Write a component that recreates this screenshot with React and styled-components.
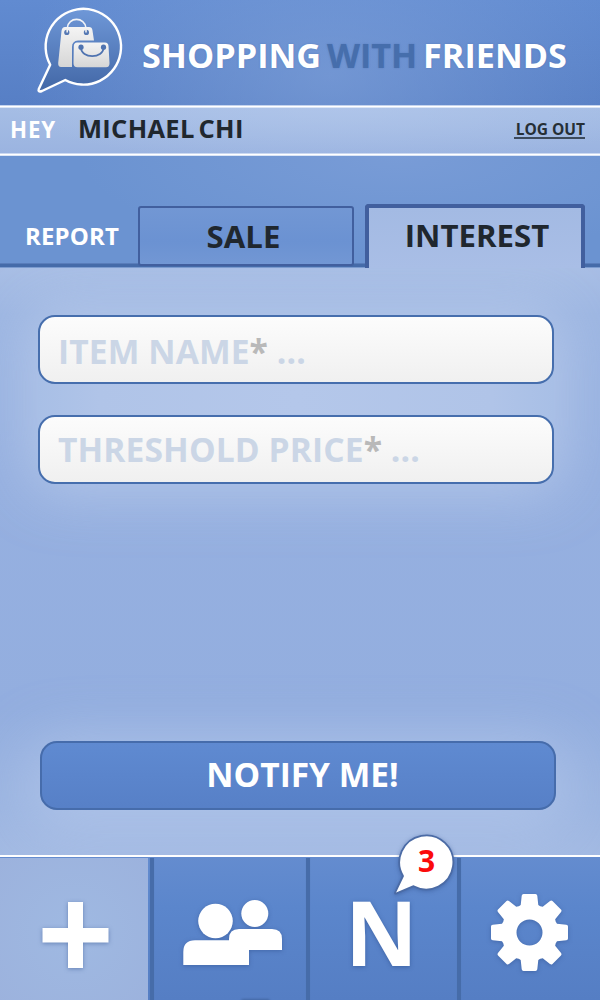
import React from "react";
import styled, { createGlobalStyle } from "styled-components";

const GlobalStyle = createGlobalStyle`
  * { box-sizing: border-box; }
  body { margin: 0; }
`;

const Screen = styled.main`
  display: flex;
  flex-direction: column;
  width: 600px;
  height: 1000px;
  overflow: hidden;
  font-family: "Open Sans", sans-serif;
  font-weight: 700;
  line-height: 1;
  white-space: nowrap;
  color: #fff;
  background: #6b93d1;
`;

const Header = styled.header`
  display: flex;
  align-items: flex-start;
  height: 105px;
  padding: 4px 0 0 33px;
  background:
    radial-gradient(ellipse 310px 190px at 330px 75px, rgba(130, 163, 218, 0.6), rgba(110, 150, 212, 0) 100%),
    linear-gradient(#618bd1, #577fc5);
`;

const Title = styled.h1`
  margin: 34px 0 0 16px;
  font-size: 34.2px;
  line-height: 34px;
  text-shadow: 0 0 2px rgba(62, 98, 165, 0.45);
  word-spacing: -3px;
`;

const Accent = styled.span`
  color: #466eac;
`;

const UserBar = styled.section`
  display: flex;
  height: 51px;
  padding: 3px 15px 0 10px;
  background:
    linear-gradient(#c4d3ee 1px, #fff 1px 2px, #dce6f6 2px) 0 0 / 100% 3px no-repeat,
    linear-gradient(#cbd9f1 1px, #fff 1px 2px, #dce6f6 2px) 0 100% / 100% 3px no-repeat,
    radial-gradient(ellipse 330px 60px at 340px 0, rgba(182, 202, 237, 0.6), rgba(170, 193, 232, 0) 100%),
    linear-gradient(#a6bee5, #9ab3e0);
`;

const Greeting = styled.span`
  width: 68px;
  margin-top: 10px;
  font-size: 22.3px;
  line-height: 23px;
  letter-spacing: 0.9px;
`;

const UserName = styled.span`
  flex: 1;
  margin-top: 7px;
  font-size: 25.5px;
  line-height: 26px;
  letter-spacing: 0.3px;
  word-spacing: -3px;
  color: #20272e;
`;

const LogOut = styled.a`
  align-self: flex-start;
  margin-top: 12px;
  height: 19px;
  font-size: 15.5px;
  line-height: 18px;
  padding-left: 2px;
  color: #262f36;
  border-bottom: 2px solid #3c4a5c;
`;

const TabBar = styled.nav`
  display: flex;
  align-items: flex-end;
  height: 112px;
  padding-left: 25px;
  background:
    linear-gradient(#456ba9, #456ba9) 0 108px / 100% 3px no-repeat,
    linear-gradient(#5579b8, #7f9fd2) 0 107px / 100% 5px no-repeat,
    radial-gradient(ellipse 320px 100px at 400px 0, rgba(124, 158, 216, 0.8), rgba(107, 147, 210, 0)),
    #6b93d1;
`;

const TabLabel = styled.span`
  width: 113px;
  margin-bottom: 20px;
  font-size: 24px;
  line-height: 25px;
  letter-spacing: 0.15px;
`;

const Tab = styled.button`
  display: flex;
  justify-content: center;
  align-items: flex-start;
  width: ${(p) => (p.$active ? "220px" : "216px")};
  height: ${(p) => (p.$active ? "64px" : "60px")};
  margin: ${(p) => (p.$active ? "0 0 0 11px" : "0 0 2px")};
  padding: ${(p) => (p.$active ? "12px 0 0 4px" : "13px 5px 0 0")};
  border: solid #415f9e;
  border-width: ${(p) => (p.$active ? "4px 4px 0" : "2px")};
  border-radius: ${(p) => (p.$active ? "4px 4px 0 0" : "3px")};
  background: ${(p) => (p.$active ? "linear-gradient(#a3bae3, #a9bee6)" : "linear-gradient(#7297d4, #6b92d2 60%, #7297d4)")};
  color: #20272e;
  font: 700 31.2px/31px "Open Sans", sans-serif;
`;

const Content = styled.section`
  display: flex;
  flex-direction: column;
  height: 587px;
  padding: 47px 44px 0 38px;
  overflow: hidden;
  background: linear-gradient(#a8bee5, #9db6e2 8%, #96b0e0 35%, #93aedf 75%, #9cb5e1 92%, #a3bae3);
`;

const FieldGroup = styled.div`
  display: flex;
  flex-direction: column;
  gap: 31px;
  width: 516px;
  border-radius: 17px;
  background: linear-gradient(90deg, #a8bfe6, #b0c4e8 12%, #b4c7ea 50%, #b0c4e8 88%, #a8bfe6);
  box-shadow: 0 0 60px 8px rgba(186, 204, 235, 0.8);
`;

const Field = styled.label`
  display: flex;
  align-items: flex-start;
  height: 69px;
  padding: ${(p) => p.$top || "16px"} 0 0 18px;
  border: 2px solid #466ead;
  border-radius: 17px;
  background: linear-gradient(#fcfcfc, #f0f0f0);
  color: #cbd6e6;
  font-size: 33.6px;
  line-height: 36px;
  letter-spacing: 0.1px;
  white-space: pre;
`;

const Required = styled.span`
  color: #b9b9b9;
`;

const Submit = styled.button`
  width: 516px;
  height: 69px;
  margin: 257px 0 0 2px;
  padding: 0 0 3px 9px;
  border: 2px solid #466cab;
  border-radius: 17px;
  background: linear-gradient(#5f8ad1, #5780c7);
  box-shadow: 0 12px 60px 12px rgba(178, 198, 233, 0.75);
  color: #fff;
  font: 700 33.5px/36px "Open Sans", sans-serif;
`;

const BottomNav = styled.nav`
  position: relative;
  display: flex;
  height: 145px;
  border-top: 2px solid #fff;
  background: linear-gradient(#648ccf, #5b86cc 35%, #557ec4);
`;

const NavItem = styled.button`
  display: flex;
  width: ${(p) => p.$width};
  margin: ${(p) => (p.$active ? "1px 2px 0 0" : "0")};
  padding: ${(p) => p.$pad};
  border: 0;
  background: ${(p) => (p.$active ? "radial-gradient(circle at 75px 75px, #9fb9e2, #9cb2dd)" : "transparent")};
  color: #fff;
  font: 700 89.5px/90px "Open Sans", sans-serif;
  text-shadow: 0 1px 4px rgba(45, 78, 140, 0.6);
`;

const Divider = styled.i`
  width: 4px;
  height: 142px;
  margin-top: 1px;
  background: #466ca9;
  box-shadow: 0 0 1px #5078b9;
`;

const Glyph = styled.svg`
  display: block;
  flex: none;
  overflow: visible;
  filter: drop-shadow(0 1px 2px rgba(45, 78, 140, 0.5));
`;

const Smudge = styled.i`
  position: absolute;
  left: 241px;
  bottom: -4px;
  width: 29px;
  height: 5px;
  border-radius: 3px;
  background: rgba(59, 93, 150, 0.7);
  filter: blur(1px);
`;

const Badge = styled.div`
  position: absolute;
  left: 391px;
  top: -26px;
  width: 68px;
  height: 66px;
`;

const Count = styled.span`
  position: absolute;
  left: 27px;
  top: 15px;
  font-size: 30px;
  line-height: 30px;
  color: #fb0b0b;
`;

function Logo() {
  return (
    <svg width="93" height="93" viewBox="33 4 93 93">
      <defs>
        <linearGradient id="bubble" x1="0" y1="0" x2="0" y2="1">
          <stop offset="0" stopColor="#6f98d8" />
          <stop offset="1" stopColor="#4267a6" />
        </linearGradient>
        <linearGradient id="bag" x1="0" y1="0" x2="0" y2="1">
          <stop offset="0" stopColor="#f4f4f4" />
          <stop offset="1" stopColor="#d6d6d6" />
        </linearGradient>
      </defs>
      <path
        d="M50.2 64.8 A37.7 37.9 0 1 1 65.3 80 L42 91 Q37.6 92.6 38.8 89 Z"
        fill="url(#bubble)"
        stroke="#fff"
        strokeWidth="2.4"
        strokeLinejoin="round"
      />
      <path d="M67.3 28 C68 16.5 85 16.5 86 28" fill="none" stroke="#f2f4f8" strokeWidth="1.6" />
      <path
        d="M65 27 H89 Q92 27 92.4 30 L94 40.5 H78 Q72 41 72 47 V67 H61 Q58 67 58.2 63 L61.5 31 Q62 27 65 27Z"
        fill="url(#bag)"
      />
      <circle cx="66.8" cy="32.4" r="2.6" fill="#5679b4" />
      <circle cx="86.4" cy="32.4" r="2.6" fill="#5679b4" />
      <path d="M67.2 28.5 V32.5 M86 28.5 V32.5" stroke="#f2f2f2" strokeWidth="1.6" />
      <path d="M77 42.5 H105 Q108.3 42.5 108.5 46 L109.5 63 Q109.7 67.2 106 67.2 H77.5 Q73.3 67.2 73.5 63 L73.8 46 Q74 42.5 77 42.5Z" fill="url(#bag)" />
      <path d="M81 47.5 C81 59 103.5 59 103.5 47.5" fill="none" stroke="#4f73b0" strokeWidth="1.8" />
      <circle cx="81" cy="47.2" r="2.6" fill="#4f73b0" />
      <circle cx="103.5" cy="47.2" r="2.6" fill="#4f73b0" />
    </svg>
  );
}

const gearPath = (() => {
  const points = [];
  for (let i = 0; i < 8; i++) {
    const a = (i * Math.PI) / 4;
    const at = (x, y) => [
      (x * Math.cos(a) - y * Math.sin(a)).toFixed(2),
      (x * Math.sin(a) + y * Math.cos(a)).toFixed(2),
    ].join(" ");
    points.push(
      `${i ? "L" : "M"}${at(-10.7, -26.3)} L${at(-8.8, -27.5)} L${at(-7.8, -36.8)} Q${at(-7.5, -38.5)} ${at(-6, -38.5)} L${at(6, -38.5)} Q${at(7.5, -38.5)} ${at(7.8, -36.8)} L${at(8.8, -27.5)} L${at(10.7, -26.3)}`
    );
  }
  return points.join(" ") + "Z M13 0 A13 13 0 1 0 -13 0 A13 13 0 1 0 13 0Z";
})();

export default function App() {
  return (
    <Screen>
      <GlobalStyle />
      <Header>
        <Logo />
        <Title>
          SHOPPING <Accent>WITH</Accent> FRIENDS
        </Title>
      </Header>
      <UserBar>
        <Greeting>HEY</Greeting>
        <UserName>MICHAEL CHI</UserName>
        <LogOut>LOG OUT</LogOut>
      </UserBar>
      <TabBar>
        <TabLabel>REPORT</TabLabel>
        <Tab>SALE</Tab>
        <Tab $active>INTEREST</Tab>
      </TabBar>
      <Content>
        <FieldGroup>
          <Field>ITEM NAME<Required>*</Required> ...</Field>
          <Field $top="14px">THRESHOLD PRICE<Required>*</Required> ...</Field>
        </FieldGroup>
        <Submit>NOTIFY ME!</Submit>
      </Content>
      <BottomNav>
        <NavItem $active $width="148px" $pad="44px 0 0 42px">
          <Glyph width="67" height="66">
            <path d="M26 0H41V26H66.5V40.5H41V66H26V40.5H.5V26H26Z" fill="#fff" />
          </Glyph>
        </NavItem>
        <Divider />
        <NavItem $width="152px" $pad="43px 0 0 29px">
          <Glyph width="99" height="65" fill="#fff">
            <circle cx="32.5" cy="21" r="17.3" />
            <circle cx="71.8" cy="13.5" r="13.5" />
            <path d="M0.3 65V52Q0.3 40.3 12 40.3H46V39Q46 29 56 29H89Q99 29 99 39V50H66V65Z" />
          </Glyph>
        </NavItem>
        <Divider />
        <NavItem $width="147px" $pad="29px 0 0 35px">N</NavItem>
        <Divider />
        <NavItem $width="139px" $pad="37px 0 0 30px">
          <Glyph width="77" height="77" viewBox="-38.5 -38.5 77 77">
            <path d={gearPath} fill="#fff" fillRule="evenodd" />
          </Glyph>
        </NavItem>
        <Smudge />
        <Badge>
          <Glyph width="68" height="66" viewBox="391 831 68 66">
            <path
              d="M403 876 A27 27 0 1 1 413.6 886.2 L396.5 893.4 Q394.4 894.2 395.3 892.2Z"
              fill="#fff"
              stroke="#4b6ba5"
              strokeWidth="1.8"
              strokeLinejoin="round"
            />
          </Glyph>
          <Count>3</Count>
        </Badge>
      </BottomNav>
    </Screen>
  );
}
